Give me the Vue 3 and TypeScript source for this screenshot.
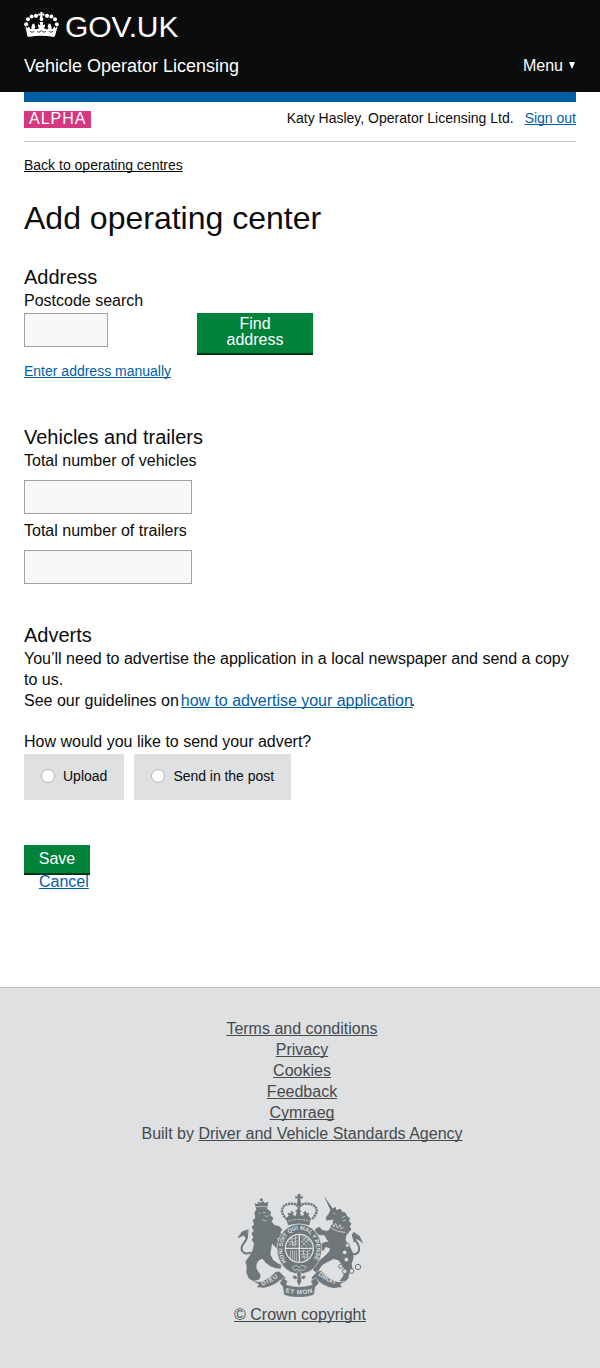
<script setup lang="ts">
import { ref } from 'vue'

const footerLinks: string[] = ['Terms and conditions', 'Privacy', 'Cookies', 'Feedback', 'Cymraeg']
const advertOptions: { value: string; label: string }[] = [
  { value: 'upload', label: 'Upload' },
  { value: 'post', label: 'Send in the post' },
]

const postcode = ref('')
const vehicles = ref('')
const trailers = ref('')
const method = ref('')
</script>

<template>
  <div class="page">
    <header class="header">
      <a class="logo">
        <svg class="crown" viewBox="72 36 105 78" aria-hidden="true">
          <g fill="#fff">
            <path d="M121 36h7l-1 6 6-2v8l-6-2 1 9h-8l1-9-6 2v-8l6 2z" />
            <circle cx="124.500" cy="58" r="5.500" />
            <circle cx="108" cy="47.500" r="6.300" />
            <circle cx="95" cy="49.500" r="6" />
            <circle cx="84" cy="58" r="6" />
            <circle cx="78.500" cy="73" r="6" />
            <circle cx="141" cy="47.500" r="6.300" />
            <circle cx="154" cy="49.500" r="6" />
            <circle cx="165" cy="58" r="6" />
            <circle cx="170.500" cy="73" r="6" />
            <path d="M76 78l7 7 3-6 5 8 4-1-1-5 4-10h5l3 11-3 5 4 1 8-2 3-5-4 1v-9l7 3-2-10h11l-2 10 7-3v9l-4-1 3 5 8 2 4-1-3-5 3-11h5l4 10-1 5 4 1 5-8 3 6 7-7-8 30-4 3c-24-5-51-5-75 0l-4-3z" />
          </g>
          <g fill="none" stroke="#0b0c0c">
            <path d="M90 94l6 3 7-3M146 94l7 3 6-3M111 94l6 3 7-5 8 5 6-3" stroke-width="2.200" />
          </g>
        </svg>
        <span class="logo-text">GOV.UK</span>
      </a>
      <div class="header-row">
        <span class="service">Vehicle Operator Licensing</span>
        <a class="menu">Menu<span class="arrow" /></a>
      </div>
    </header>

    <main class="main">
      <div class="bar" />
      <div class="phase">
        <span class="tag">ALPHA</span>
        <div class="user">Katy Hasley, Operator Licensing Ltd.<a class="link signout">Sign out</a></div>
      </div>

      <a class="back">Back to operating centres</a>
      <h1>Add operating center</h1>

      <section class="address">
        <h2>Address</h2>
        <label for="postcode">Postcode search</label>
        <div class="search">
          <input id="postcode" v-model="postcode" class="field short" type="text">
          <button class="button find" type="button">Find address</button>
        </div>
        <a class="link manual">Enter address manually</a>
      </section>

      <section class="vehicles">
        <h2>Vehicles and trailers</h2>
        <label for="vehicles">Total number of vehicles</label>
        <input id="vehicles" v-model="vehicles" class="field" type="text">
        <label for="trailers">Total number of trailers</label>
        <input id="trailers" v-model="trailers" class="field" type="text">
      </section>

      <section class="adverts">
        <h2>Adverts</h2>
        <p>You’ll need to advertise the application in a local newspaper and send a copy to us.</p>
        <p>See our guidelines on<a class="link guide">how to advertise your application</a>.</p>
        <p class="question">How would you like to send your advert?</p>
        <div class="options">
          <label v-for="option in advertOptions" :key="option.value" class="option">
            <input v-model="method" type="radio" name="method" :value="option.value">
            {{ option.label }}
          </label>
        </div>
      </section>

      <div class="actions">
        <button class="button save" type="button">Save</button>
        <a class="link cancel">Cancel</a>
      </div>
    </main>

    <footer class="footer">
      <ul class="footer-list">
        <li v-for="item in footerLinks" :key="item"><a>{{ item }}</a></li>
        <li>Built by <a>Driver and Vehicle Standards Agency</a></li>
      </ul>
      <svg class="arms" viewBox="36 24 381 312" aria-hidden="true">
        <defs>
          <path id="garter" d="M184 231A51 59 0 1 1 262 231" />
          <path id="motto-left" d="M112 302Q138 294 164 274" />
          <path id="motto-mid" d="M181 322Q222 334 265 322" />
          <path id="motto-right" d="M279 270Q304 292 337 299" />
        </defs>
        <g fill="#6f777b">
          <!-- lion -->
          <path d="M89 54l8 4 3-9 6 5 8-6 5 6 11-4-4 23q-16-6-32 1z" />
          <circle cx="109" cy="44" r="4.500" />
          <path d="M93 74Q110 66 128 73L138 80 136 91 145 99 140 110 149 120 163 124 172 134 166 142 173 152 169 162 157 158 161 172 167 190 160 196 149 184 141 176 138 194 136 208 144 224 158 235 169 240 167 251 152 250 134 243 121 232 112 221 102 226 95 236 94 250 101 262 107 270 104 283 86 289 72 281 64 263 65 244 61 230 74 212 83 194 87 174 80 164 85 156 79 146 86 138 80 126 87 118 83 106 91 98 88 84z" />
          <!-- unicorn -->
          <path d="M297 33l28 40-8 4z" />
          <path d="M316 76L332 65 334 75 346 71 352 80 362 83 366 93 375 99 372 108 380 116 374 124 379 133 372 142 364 151 362 166 373 182 383 200 386 218 380 236 382 250 374 262 370 280 360 292 344 288 355 272 358 254 352 240 340 226 326 222 306 232 292 240 285 250 278 263 268 259 261 248 272 240 284 226 300 212 312 200 315 190 301 186 296 197 284 193 286 178 300 171 311 170 304 162 298 151 284 151 272 143 270 132 284 125 291 134 304 138 313 134 319 118 326 104 314 105 305 107 302 98 311 86z" />
        </g>
        <g fill="none" stroke="#6f777b" stroke-width="6" stroke-linecap="round">
          <path d="M76 203C51 212 43 191 56 175C70 158 69 144 57 140" />
          <path d="M380 207C401 212 407 194 399 178C388 160 377 152 388 145" />
          <path d="M69 134l-18 7-12 17 17-7 9 10zM386 143l17 10 10 20-17-12-9 10z" stroke-width="2" fill="#6f777b" />
        </g>
        <!-- royal crown -->
        <g fill="#6f777b">
          <path d="M218 27h9l-1 8 7-2v8l-7-1 1 12h-10l1-12-7 1v-8l7 2z" />
          <circle cx="222" cy="57" r="7" />
          <path d="M184 101l7-10-4-8 10 2 1-8 8 5-2 9 9 1 2-12h-6l11-10 11 10h-6l2 12 10-1-2-9 8-5 1 8 9-2-3 8 8 10-5 20q-33-10-64 0z" />
        </g>
        <path d="M186 103C158 78 173 56 199 56Q214 55 222 69Q230 55 245 56C272 56 289 76 260 103" fill="none" stroke="#6f777b" stroke-width="7.500" stroke-dasharray="6.500 2" />
        <path d="M190 108Q222 99 255 108" fill="none" stroke="#dee0e2" stroke-width="2.500" stroke-dasharray="6 3" />
        <!-- garter and quartered shield -->
        <ellipse cx="223" cy="192" rx="67" ry="75" fill="#6f777b" stroke="#dee0e2" stroke-width="2" />
        <text class="motto garter-text"><textPath href="#garter" textLength="244" lengthAdjust="spacingAndGlyphs">HONI SOIT QUI MAL Y PENSE</textPath></text>
        <circle cx="223" cy="190" r="44" fill="#dee0e2" />
        <circle cx="223" cy="190" r="40" fill="#6f777b" />
        <g fill="none" stroke="#dee0e2">
          <path d="M223 150v80M183 190h80" stroke-width="4" />
          <path d="M193 164l8-6 6 4 11-5M190 172l10-3 5 4 13-6M191 181l9-5 8 4 10-5M199 155l5 30M212 151l-2 34" stroke-width="2.200" />
          <path d="M229 156l28 27M234 153l23 19M229 168l18 18M230 184l23-24M229 172l16-17" stroke-width="2" />
          <path d="M196 196v23M202 196v28M208 196v30M214 196v32" stroke-width="2" />
          <path d="M228 200l11-4 5 4 12-4M228 209l9-3 6 4 12-5M228 218l9-4 6 4 8-4M235 196l3 28M248 196l-2 24" stroke-width="2.200" />
        </g>
        <path d="M202 246l12-5 8 7 8-7 15 5-12 11-9-4-3 4-5-4-8 4z" fill="#6f777b" stroke="#dee0e2" stroke-width="2" />
        <!-- faces, mane and coronet details -->
        <g fill="none" stroke="#dee0e2" stroke-width="3">
          <path d="M311 122q22 20 51 20" stroke-width="2.500" />
          <path d="M318 121l3-9 6 14 5-11 6 15 7-11 4 14 8-8" stroke-width="2.500" />
          <path d="M326 84l5 2M350 98l10-4M352 108l11-3" stroke-width="2" />
          <path d="M113 82l9 2M101 84l6 2M119 92q5 4 12 0M112 101l6 7 7-2" stroke-width="2" />
          <path d="M93 66q15-5 33 0" stroke-width="2" />
        </g>
        <g fill="#dee0e2" stroke="#6f777b" stroke-width="3">
          <circle cx="367" cy="181" r="6" />
          <circle cx="359" cy="202" r="7" />
          <circle cx="364" cy="224" r="7" />
          <circle cx="347" cy="244" r="6" />
          <circle cx="359" cy="259" r="7" />
          <circle cx="380" cy="258" r="7" />
          <circle cx="399" cy="246" r="8" />
        </g>
        <!-- motto ribbon -->
        <g fill="#6f777b" stroke="#dee0e2" stroke-width="1.500">
          <path d="M80 288l21 2q27-4 51-30l11-1 19 20-5 10-11-4q-20 19-50 24l-21-2 6-9z" />
          <path d="M364 288l-22 3q-30-6-53-34l-12 1-18 20 6 11 11-4q20 20 49 25l27-3-6-9z" />
          <path d="M173 304l-9-9 9-16 15 9-4 11q38 12 78 0l-5-11 16-10 9 17-11 11-4 23q-43 16-90 1z" />
          <path d="M217 281q-14 5-14-8 9-6 15 5-6-16 4-22 10 6 5 22 8-11 15-5 0 13-14 8l2 7-8 17-7-17z" />
        </g>
        <g class="motto">
          <text><textPath href="#motto-left" textLength="54">DIEU</textPath></text>
          <text><textPath href="#motto-mid" textLength="83">ET MON</textPath></text>
          <text><textPath href="#motto-right" textLength="61">DROIT</textPath></text>
        </g>
      </svg>
      <a class="copyright">© Crown copyright</a>
    </footer>
  </div>
</template>

<style>
body {
  background: #fff;
}
</style>

<style scoped>
.page {
  display: flex;
  flex-direction: column;
  min-height: 1368px;
  font-family: "Liberation Sans", Arial, Helvetica, sans-serif;
  font-size: 16px;
  line-height: 21px;
  color: #0b0c0c;
}
.page * {
  box-sizing: border-box;
}
h1, h2, p, ul {
  margin: 0;
  padding: 0;
  font-weight: 400;
}
a {
  text-decoration-skip-ink: none;
  text-decoration-thickness: 1px;
}
.header {
  height: 92px;
  padding: 10px 24px 0;
  background: #0b0c0c;
  color: #fff;
}
.logo {
  display: flex;
  align-items: flex-start;
  height: 34px;
}
.crown {
  width: 35px;
  height: 26px;
  margin-top: 2px;
}
.logo-text {
  margin-left: 6px;
  font-size: 30px;
  line-height: 34px;
  letter-spacing: -0.1px;
}
.header-row {
  display: flex;
  justify-content: space-between;
  margin-top: 12px;
}
.service {
  font-size: 18px;
}
.menu {
  display: flex;
  align-items: center;
  height: 19px;
}
.arrow {
  margin: 0 1px 0 6px;
  border: 3.5px solid transparent;
  border-top: 7px solid #fff;
  border-bottom: 0;
}
.main {
  display: flex;
  flex-direction: column;
  align-items: flex-start;
  height: 895px;
  padding: 0 24px;
}
.bar {
  width: 100%;
  height: 10px;
  background: #005ea5;
}
.phase {
  display: flex;
  justify-content: space-between;
  align-items: flex-start;
  width: 100%;
  height: 40px;
  padding-top: 6px;
  border-bottom: 1px solid #bfc1c3;
  font-size: 14px;
}
.tag {
  width: 67px;
  height: 17px;
  margin-top: 3px;
  padding-left: 5px;
  background: #d53880;
  color: #fff;
  font-size: 16px;
  line-height: 16px;
  letter-spacing: 1px;
}
.link {
  color: #005ea5;
  text-decoration-line: underline;
}
.signout {
  margin-left: 11px;
}
.back {
  margin-top: 13px;
  font-size: 14px;
  line-height: 20px;
  text-decoration-line: underline;
}
h1 {
  margin-top: 25px;
  font-size: 32px;
  line-height: 36px;
}
h2 {
  margin-bottom: 1px;
  font-size: 20px;
  line-height: 24px;
}
section {
  display: flex;
  flex-direction: column;
  align-items: flex-start;
  width: 100%;
}
.address {
  margin-top: 29px;
}
.search {
  display: flex;
  align-items: flex-start;
  margin-top: 2px;
}
.field {
  width: 168px;
  height: 34px;
  margin: 0;
  padding: 4px;
  border: 1px solid #a1a1a1;
  border-radius: 0;
  background: #f8f8f8;
}
.field.short {
  width: 84px;
}
.button {
  margin: 0;
  border: 0;
  border-bottom: 2px solid #003618;
  background: #00823b;
  color: #fff;
  font: 16px/16px "Liberation Sans", Arial, sans-serif;
}
.find {
  width: 116px;
  height: 42px;
  margin-left: 89px;
  padding: 3px 20px 5px;
}
.manual {
  margin-top: 6px;
  font-size: 14px;
  line-height: 20px;
}
.vehicles {
  margin-top: 44px;
}
.vehicles .field {
  margin-top: 9px;
}
.vehicles .field + label {
  margin-top: 6px;
}
.adverts {
  margin-top: 39px;
}
.guide {
  margin: 0 -2px 0 2px;
  letter-spacing: -0.03px;
}
.question {
  margin-top: 20px;
}
.options {
  display: flex;
  gap: 10px;
  margin-top: 2px;
}
.option {
  display: flex;
  align-items: center;
  height: 46px;
  padding: 0 17px 2px;
  background: #dee0e2;
  font-size: 14px;
}
.option + .option {
  width: 157px;
  padding-right: 0;
  letter-spacing: -0.03px;
}
.option input {
  appearance: none;
  width: 14px;
  height: 14px;
  margin: 0 8px 0 0;
  border: 1px solid #b4b4b4;
  border-radius: 50%;
  background: #fff;
}
.actions {
  display: flex;
  flex-direction: column;
  align-items: flex-start;
  margin-top: 45px;
}
.save {
  width: 66px;
  height: 30px;
  padding: 0;
}
.cancel {
  margin: -4px 0 0 15px;
}
.footer {
  display: flex;
  flex: 1;
  flex-direction: column;
  align-items: center;
  padding-top: 30px;
  border-top: 1px solid #bfc1c3;
  background: #dee0e2;
  color: #454a4c;
}
.footer-list {
  padding-left: 4px;
  list-style: none;
  text-align: center;
}
.footer a {
  text-decoration-line: underline;
}
.arms {
  width: 127px;
  height: 104px;
  margin-top: 49px;
}
.motto {
  fill: #dee0e2;
  font-size: 19px;
  font-weight: 700;
}
.garter-text {
  font-size: 17px;
}
.copyright {
  margin-top: 7px;
}
</style>
